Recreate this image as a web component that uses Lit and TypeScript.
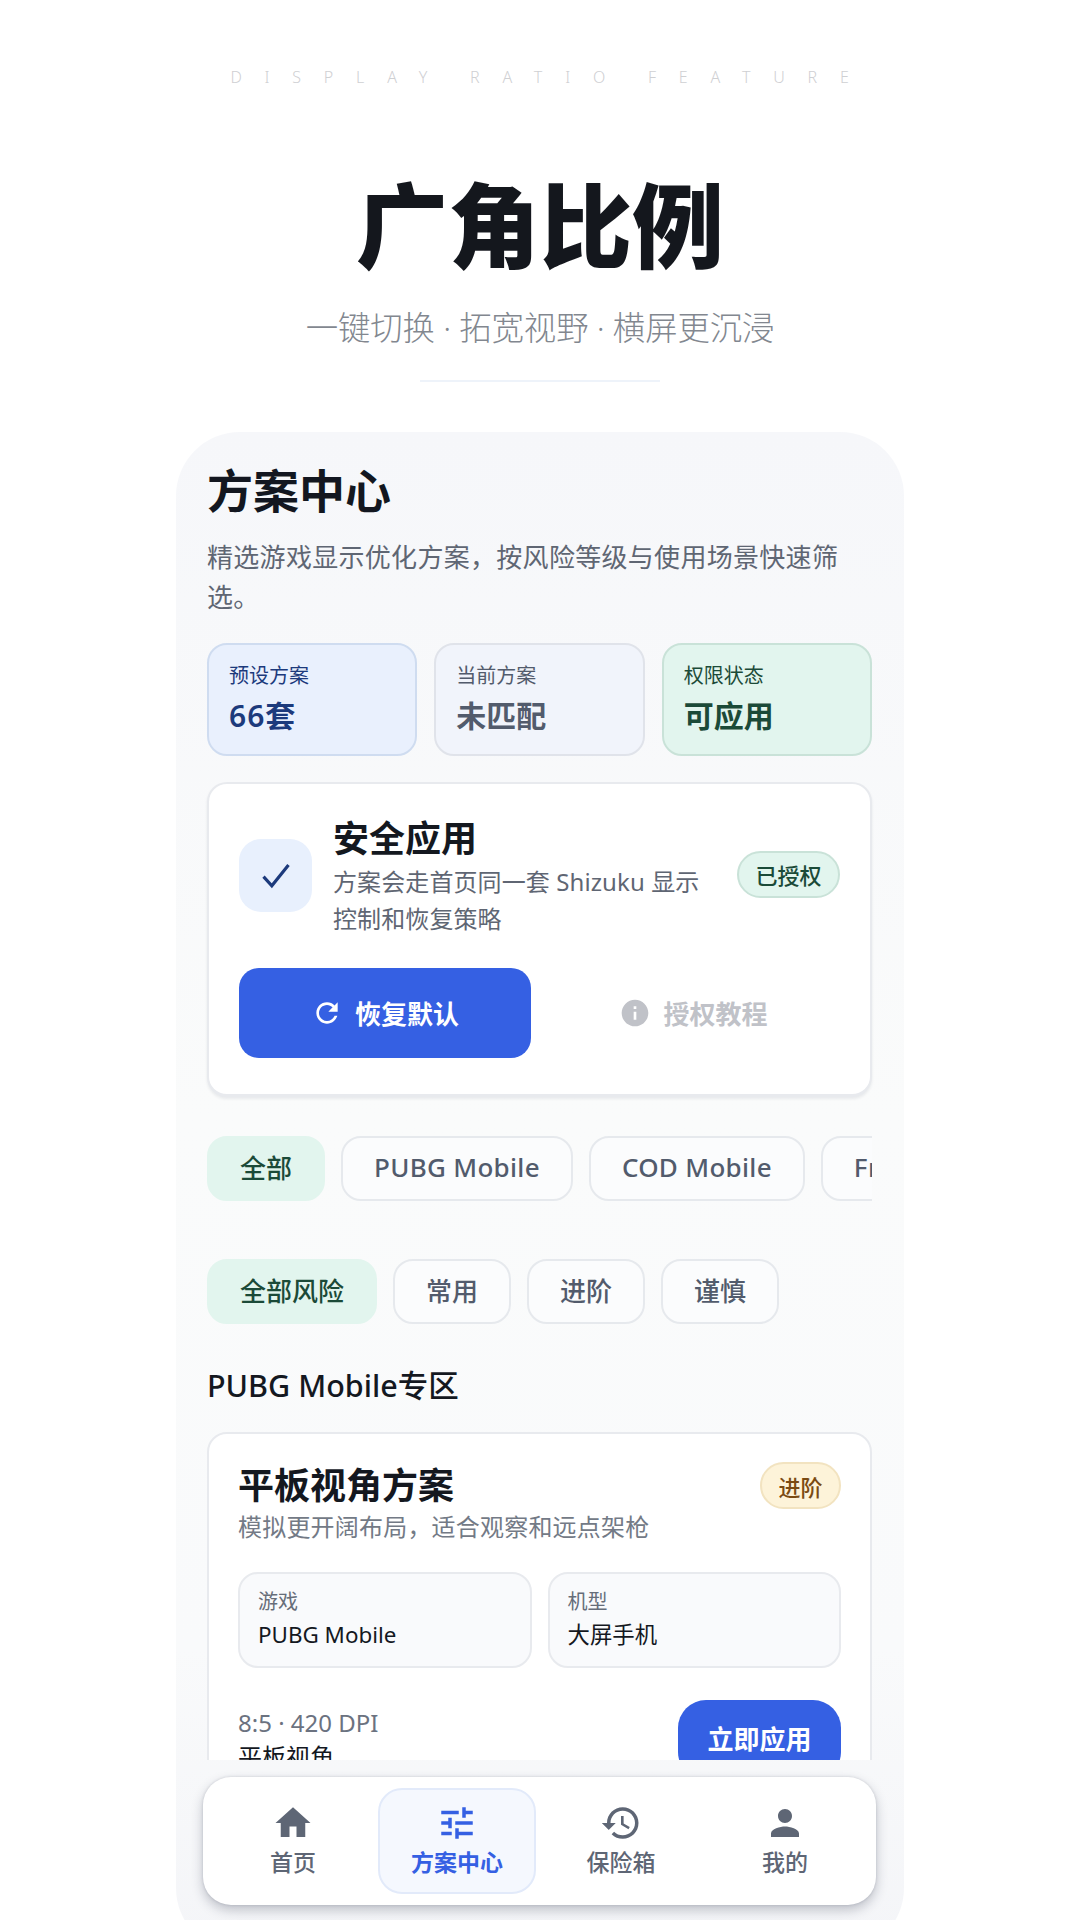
import { LitElement, html, css, svg } from "lit";
import { customElement } from "lit/decorators.js";

const I = {
  home: "M10 20v-6h4v6h5v-8h3L12 3 2 12h3v8z",
  tune: "M3 17v2h6v-2H3zM3 5v2h10V5H3zm10 16v-2h8v-2h-8v-2h-2v6h2zM7 9v2H3v2h4v2h2V9H7zm14 4v-2H11v2h10zm-6-4h2V7h4V5h-4V3h-2v6z",
  history: "M13 3c-4.97 0-9 4.03-9 9H1l3.89 3.89.07.14L9 12H6c0-3.87 3.13-7 7-7s7 3.13 7 7-3.13 7-7 7c-1.93 0-3.68-.79-4.94-2.06l-1.42 1.42C8.27 19.99 10.51 21 13 21c4.97 0 9-4.03 9-9s-4.03-9-9-9zm-1 5v5l4.28 2.54.72-1.21-3.5-2.08V8H12z",
  person: "M12 12c2.21 0 4-1.79 4-4s-1.79-4-4-4-4 1.79-4 4 1.79 4 4 4zm0 2c-2.67 0-8 1.34-8 4v2h16v-2c0-2.66-5.33-4-8-4z",
  refresh: "M17.65 6.35C16.2 4.9 14.21 4 12 4c-4.42 0-7.99 3.58-7.99 8s3.57 8 7.99 8c3.73 0 6.84-2.55 7.73-6h-2.08c-.82 2.33-3.04 4-5.65 4-3.31 0-6-2.69-6-6s2.69-6 6-6c1.66 0 3.14.69 4.22 1.78L13 11h7V4l-2.35 2.35z",
  info: "M12 2C6.48 2 2 6.48 2 12s4.48 10 10 10 10-4.48 10-10S17.52 2 12 2zm1 15h-2v-6h2v6zm0-8h-2V7h2v2z",
};
const icon = (d: string) => html`<svg viewBox="0 0 24 24" fill="currentColor">${svg`<path d=${d}></path>`}</svg>`;

@customElement("app-root")
export class AppRoot extends LitElement {
  static styles = css`
    :host { display: block; width: 1080px; height: 1920px; overflow: hidden; background: #fff;
      font-family: "Noto Sans", "Noto Sans CJK SC", sans-serif; color: #14181f; }
    .hero { height: 432px; display: flex; flex-direction: column; align-items: center; }
    .eyebrow { margin-top: 66px; height: 22px; line-height: 22px; font-size: 16px; font-weight: 300; letter-spacing: 22.8px; word-spacing: -7px; white-space: pre; color: #cfd0d3; padding-left: 22px; }
    .big { margin-top: 85px; height: 96px; line-height: 96px; font-size: 92px; font-weight: 900; color: #14171d; font-family: "Noto Sans CJK SC", sans-serif; }
    .tag { margin-top: 35px; height: 46px; line-height: 46px; font-size: 32.4px; font-weight: 300; color: #82878f; letter-spacing: -.1px; }
    .rule { margin-top: 30px; width: 240px; height: 2px; background: #eef3fa; }
    .phone { width: 728px; height: 1520px; margin-left: 176px; border-radius: 64px; overflow: hidden; background: linear-gradient(#f6f7fa, #fafbfb 45%, #f9fafb 80%, #f4f5f8);
      display: flex; flex-direction: column; }
    .scroll { height: 1328px; flex: none; overflow: hidden; padding: 0 32px 0 31px; box-sizing: border-box; }
    h1 { margin: 31px 0 0; height: 54px; line-height: 54px; font-size: 46px; font-weight: 700; color: #131720; }
    .lead { margin: 20px 0 0; font-size: 26px; letter-spacing: .3px; line-height: 40px; color: #5f6673; }
    .stats { margin-top: 26px; display: grid; grid-template-columns: repeat(3, 1fr); gap: 17px; }
    .stat { height: 113px; box-sizing: border-box; border-radius: 20px; border: 2px solid; padding: 17px 20px; }
    .stat small { display: block; font-size: 20px; line-height: 28px; }
    .stat b { display: block; margin-top: 6px; font-size: 30px; line-height: 40px; font-weight: 600; }
    .s1 { background: #e9f0fd; border-color: #cfdcf0; color: #1c3a7c; }
    .s1 b { letter-spacing: 1px; }
    .s2 { background: #f1f4fb; border-color: #e0e3ea; color: #525b6c; }
    .s3 { background: #e2f5ee; border-color: #c9e2d8; color: #1b4a38; }
    .safe { margin-top: 26px; height: 315px; box-sizing: border-box; background: #fff; border: 2px solid #e8eaee; border-bottom-width: 3px; border-radius: 20px; padding: 0 30px; box-shadow: 0 2px 3px rgba(30,40,60,.08); }
    .safetop { height: 184px; display: flex; align-items: center; gap: 21px; }
    .check { width: 73px; height: 73px; flex: none; border-radius: 22px; background: #e8f0fd; display: grid; place-items: center; color: #1c3a7c; margin-top: -2px; }
    .check svg { width: 40px; height: 40px; }
    .safetext { flex: 1; }
    .safetext h2 { margin: 0; font-size: 36px; line-height: 46px; font-weight: 600; color: #14181f; }
    .safetext p { margin: 1px 0 0; font-size: 24px; letter-spacing: .1px; line-height: 37px; color: #5f6673; width: 380px; }
    .chip { flex: none; box-sizing: border-box; display: grid; place-items: center; border-radius: 24px; border: 2px solid; font-size: 22px; font-weight: 500; }
    .ok { width: 103px; height: 47px; background: #e2f5ee; border-color: #c9e2d8; color: #1b4a38; margin-top: -4px; }
    .btns { display: grid; grid-template-columns: 292px 1fr; gap: 16px; }
    .btn { height: 90px; border-radius: 20px; display: flex; align-items: center; justify-content: center; gap: 12px; font-size: 26px; font-weight: 600; }
    .btn svg { width: 32px; height: 32px; }
    .primary { background: #3560e3; color: #fff; }
    .ghost { color: #c0c2c8; }
    .filters { display: flex; gap: 16px; overflow: hidden; }
    .f1 { margin-top: 39px; }
    .f2 { margin-top: 58px; }
    .f { flex: none; height: 65px; box-sizing: border-box; padding: 0 31px 4px; border: 2px solid #e6e9ed; border-radius: 20px; display: flex; align-items: center; font-size: 26px; font-weight: 500; color: #525b6c; background: #fbfcfd; }
    .f.latin { letter-spacing: .3px; }
    .f.on { background: #e2f5ee; border-color: #e2f5ee; color: #1b4a38; }
    h3 { margin: 41px 0 0; font-size: 30.5px; line-height: 40px; font-weight: 500; color: #14181f; }
    .card { margin-top: 27px; background: #fff; border: 2px solid #e8eaee; border-radius: 20px; padding: 28px 29px 0; height: 400px; box-sizing: border-box; }
    .cardtop { display: flex; justify-content: space-between; align-items: flex-start; }
    .cardtop h2 { margin: 1px 0 0; font-size: 36px; line-height: 46px; font-weight: 600; color: #14181f; }
    .cardtop p { margin: 0; font-size: 24px; letter-spacing: .2px; line-height: 36px; color: #737a86; }
    .adv { width: 81px; height: 47px; background: #fdf3d9; border-color: #f2e3c0; color: #7a4a12; }
    .grid2 { margin-top: 27px; display: grid; grid-template-columns: 1fr 1fr; gap: 16px; }
    .box { height: 96px; box-sizing: border-box; border: 2px solid #e8eaee; border-radius: 20px; background: #f9fafc; padding: 14px 18px; }
    .box small { display: block; font-size: 20px; line-height: 28px; color: #666d79; }
    .box b { display: block; margin-top: 3px; font-size: 22.4px; line-height: 32px; font-weight: 400; color: #14181f; }
    .foot { margin-top: 32px; display: flex; justify-content: space-between; align-items: flex-start; }
    .foot .meta { font-size: 24px; line-height: 34px; color: #6b7280; padding-top: 6px; }
    .foot .meta div { color: #14181f; line-height: 34px; }
    .apply { width: 163px; height: 80px; box-sizing: border-box; padding-bottom: 4px; border-radius: 28px; background: #3560e3; color: #fff; font-size: 26px; font-weight: 600; display: grid; place-items: center; }
    .nav { margin: 17px 0 0 27px; width: 673px; height: 128px; flex: none; box-sizing: border-box; background: #fff; border-radius: 28px; box-shadow: 0 5px 12px rgba(30,40,60,.26), 0 0 3px rgba(30,40,60,.16); display: grid; grid-template-columns: repeat(4, 164px); padding: 11px 8px; }
    .tab { display: flex; flex-direction: column; align-items: center; justify-content: flex-start; color: #5e6675; font-size: 23px; font-weight: 500; box-sizing: border-box; border: 2px solid transparent; border-radius: 24px; padding-top: 12px; margin: 0 3px; }
    .tab svg { width: 42px; height: 42px; margin-bottom: 1px; }
    .tab span { line-height: 34px; }
    .tab.on { background: #f5f8fe; border-color: #e2eafa; color: #3560e3; font-weight: 600; }
  `;

  render() {
    return html`
      <div class="hero">
        <div class="eyebrow">DISPLAY RATIO FEATURE</div>
        <div class="big">广角比例</div>
        <div class="tag">一键切换 · 拓宽视野 · 横屏更沉浸</div>
        <div class="rule"></div>
      </div>
      <div class="phone">
        <div class="scroll">
          <h1>方案中心</h1>
          <p class="lead">精选游戏显示优化方案，按风险等级与使用场景快速筛选。</p>
          <div class="stats">
            <div class="stat s1"><small>预设方案</small><b>66套</b></div>
            <div class="stat s2"><small>当前方案</small><b>未匹配</b></div>
            <div class="stat s3"><small>权限状态</small><b>可应用</b></div>
          </div>
          <div class="safe">
            <div class="safetop">
              <div class="check"><svg viewBox="0 0 24 24" fill="none" stroke="currentColor" stroke-width="1.9"><path d="M4.5 13l5 5.5L19.5 6"></path></svg></div>
              <div class="safetext">
                <h2>安全应用</h2>
                <p>方案会走首页同一套 Shizuku 显示控制和恢复策略</p>
              </div>
              <div class="chip ok">已授权</div>
            </div>
            <div class="btns">
              <div class="btn primary">${icon(I.refresh)}恢复默认</div>
              <div class="btn ghost">${icon(I.info)}授权教程</div>
            </div>
          </div>
          <div class="filters f1">
            <div class="f on">全部</div><div class="f latin">PUBG Mobile</div><div class="f latin">COD Mobile</div><div class="f latin">Free Fire</div>
          </div>
          <div class="filters f2">
            <div class="f on">全部风险</div><div class="f">常用</div><div class="f">进阶</div><div class="f">谨慎</div>
          </div>
          <h3>PUBG Mobile专区</h3>
          <div class="card">
            <div class="cardtop">
              <div><h2>平板视角方案</h2><p>模拟更开阔布局，适合观察和远点架枪</p></div>
              <div class="chip adv">进阶</div>
            </div>
            <div class="grid2">
              <div class="box"><small>游戏</small><b>PUBG Mobile</b></div>
              <div class="box"><small>机型</small><b>大屏手机</b></div>
            </div>
            <div class="foot">
              <div class="meta">8:5 · 420 DPI<div>平板视角</div></div>
              <div class="apply">立即应用</div>
            </div>
          </div>
        </div>
        <div class="nav">
          <div class="tab">${icon(I.home)}<span>首页</span></div>
          <div class="tab on">${icon(I.tune)}<span>方案中心</span></div>
          <div class="tab">${icon(I.history)}<span>保险箱</span></div>
          <div class="tab">${icon(I.person)}<span>我的</span></div>
        </div>
      </div>
    `;
  }
}
